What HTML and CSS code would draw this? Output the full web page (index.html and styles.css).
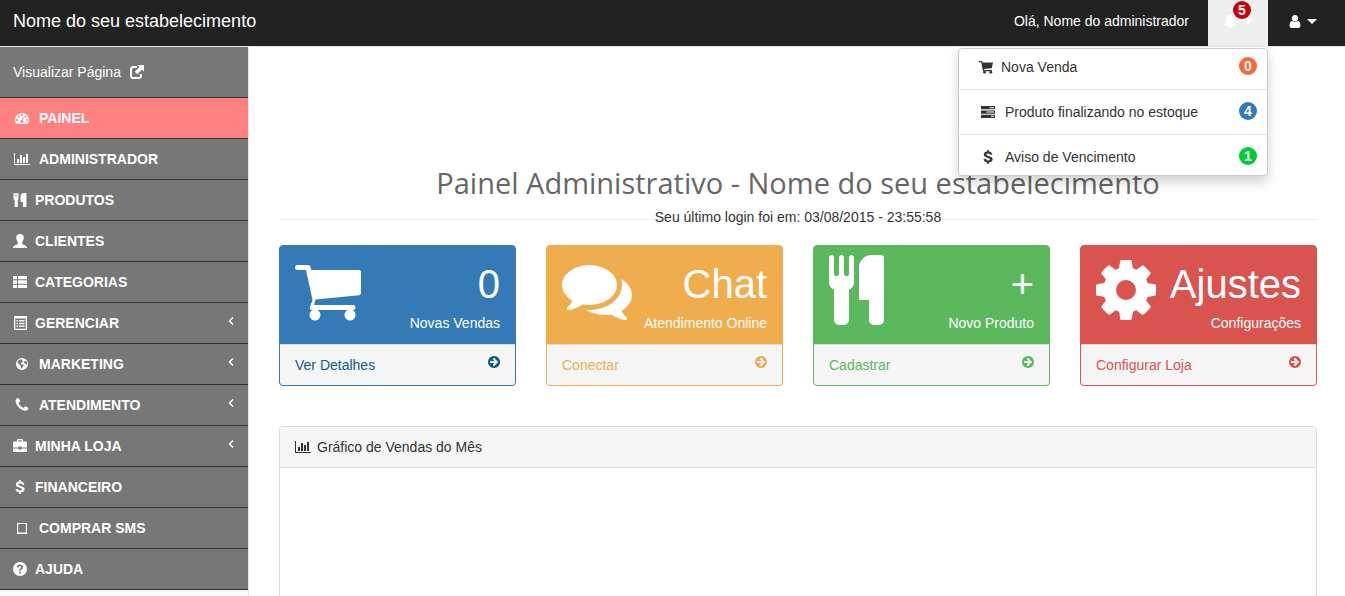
FILE: index.html
```
<!DOCTYPE html>
<html lang="pt-br">
<head>
    <meta charset="UTF-8">
    <meta name="viewport" content="width=device-width, initial-scale=1.0">
    <title>Painel Administrativo</title>
    <link rel="stylesheet" href="styles.css">
</head>
<body>

    <svg class="sprite" aria-hidden="true">
        <symbol id="cart" viewBox="0 -10 66 70">
            <path d="M2.500 0H13q2 0 2.500 2l.8 3H64q2 0 2 2v21q0 2-2 2.300L20.500 34.500 19 40H58q2.500 0 2.500 2.500T58 45H17q-3 0-2-3l2.500-7L11 5H2.500Q0 5 0 2.500T2.500 0z"/>
            <circle cx="20" cy="50" r="5.500"/>
            <circle cx="55" cy="50" r="5.500"/>
        </symbol>
        <symbol id="cart-small" viewBox="0 0 14 14">
            <path d="M0 1h3l.5 1.500H14L12.800 8.300 5 9l.3 1H13v1.200H4L2.200 2.300H0z"/>
            <circle cx="5.500" cy="12.300" r="1.400"/>
            <circle cx="11.800" cy="12.300" r="1.400"/>
        </symbol>
        <symbol id="comments" viewBox="0 0 1792 1792">
            <path d="M1408 768q0 139-94 257t-256.500 186.500-353.500 68.500q-86 0-176-16-124 88-278 128-36 9-86 16h-3q-11 0-20.500-8t-11.500-21q-1-3-1-6.500t.5-6.500 2-6l2.500-5 3.500-5.500 4-5 4.500-5 4-4.500q5-6 23-25t26-29.500 22.500-29 25-38.500 20.500-44q-124-72-195-177t-71-224q0-139 94-257t256.500-186.500 353.500-68.500 353.500 68.500 256.500 186.500 94 257zm384 256q0 120-71 224.500t-195 176.500q10 24 20.500 44t25 38.500 22.500 29 26 29.500 23 25q1 1 4 4.500t4.500 5 4 5 3.500 5.500l2.500 5 2 6 .5 6.500-1 6.500q-3 14-13 22t-22 7q-50-7-86-16-154-40-278-128-90 16-176 16-271 0-472-132 58 4 88 4 161 0 309-45t264-129q125-92 192-212t67-254q0-77-23-152 129 71 204 178t75 230z"/>
        </symbol>
        <symbol id="cutlery" viewBox="192 0 1408 1792">
            <path d="M832 64v640q0 61-35.500 111t-92.500 70v779q0 52-38 90t-90 38h-128q-52 0-90-38t-38-90v-779q-57-20-92.500-70t-35.500-111v-640q0-26 19-45t45-19 45 19 19 45v416q0 26 19 45t45 19 45-19 19-45v-416q0-26 19-45t45-19 45 19 19 45v416q0 26 19 45t45 19 45-19 19-45v-416q0-26 19-45t45-19 45 19 19 45zm768 0v1600q0 52-38 90t-90 38h-128q-52 0-90-38t-38-90v-512h-224q-13 0-22.500-9.500t-9.500-22.500v-800q0-132 94-226t226-94h256q26 0 45 19t19 45z"/>
        </symbol>
        <symbol id="cog" viewBox="128 0 1536 1792">
            <path d="M1152 896q0-106-75-181t-181-75-181 75-75 181 75 181 181 75 181-75 75-181zm512-109v222q0 12-8 23t-20 13l-185 28q-19 54-39 91 35 50 107 138 10 12 10 25t-9 23q-27 37-99 108t-94 71q-12 0-26-9l-138-108q-44 23-91 38-16 136-29 186-7 28-36 28h-222q-14 0-24.500-8.500t-11.500-21.500l-28-184q-49-16-90-37l-141 107q-10 9-25 9-14 0-25-11-126-114-165-168-7-10-7-23 0-12 8-23 15-21 51-66.500t54-70.500q-27-50-41-99l-183-27q-13-2-21-12.500t-8-23.500v-222q0-12 8-23t19-13l186-28q14-46 39-92-40-57-107-138-10-12-10-24 0-10 9-23 26-36 98.500-107.500t94.500-71.500q13 0 26 10l138 107q44-23 91-38 16-136 29-186 7-28 36-28h222q14 0 24.500 8.500t11.500 21.500l28 184q49 16 90 37l142-107q9-9 24-9 13 0 25 10 129 119 165 170 7 8 7 22 0 12-8 23-15 21-51 66.500t-54 70.500q26 50 41 98l183 28q13 2 21 12.500t8 23.500z"/>
        </symbol>
        <symbol id="arrow" viewBox="128 0 1536 1792">
            <path d="M1413 896q0-27-18-45l-91-91-362-362q-18-18-45-18t-45 18l-91 91q-18 18-18 45t18 45l189 189h-502q-26 0-45 19t-19 45v128q0 26 19 45t45 19h502l-189 189q-18 18-18 45t18 45l91 91q18 18 45 18t45-18l362-362 91-91q18-18 18-45zm251 0q0 209-103 385.500t-279.500 279.500-385.500 103-385.500-103-279.500-279.500-103-385.500 103-385.500 279.500-279.500 385.500-103 385.500 103 279.500 279.500 103 385.500z"/>
        </symbol>
        <symbol id="dashboard" viewBox="0 0 1792 1792">
            <path d="M384 1152q0-53-37.500-90.500t-90.500-37.500-90.500 37.500-37.500 90.500 37.500 90.500 90.500 37.500 90.500-37.500 37.500-90.500zm192-448q0-53-37.500-90.500t-90.500-37.500-90.500 37.500-37.500 90.500 37.500 90.500 90.500 37.500 90.500-37.500 37.500-90.500zm428 481l101-382q6-26-7.500-48.500t-38.500-29.500-48 6.500-30 39.500l-101 382q-60 5-107 43.500t-63 98.500q-20 77 20 146t117 89 146-20 89-117q16-60-6-117t-72-91zm660-33q0-53-37.500-90.500t-90.500-37.500-90.500 37.500-37.500 90.500 37.500 90.500 90.500 37.500 90.500-37.500 37.500-90.500zm-640-640q0-53-37.500-90.500t-90.500-37.500-90.500 37.500-37.500 90.500 37.500 90.500 90.500 37.500 90.500-37.500 37.500-90.500zm448 192q0-53-37.500-90.500t-90.500-37.500-90.500 37.500-37.500 90.500 37.500 90.500 90.500 37.500 90.500-37.500 37.500-90.500zm320 448q0 261-141 483-19 29-54 29h-1402q-35 0-54-29-141-221-141-483 0-182 71-348t191-286 286-191 348-71 348 71 286 191 191 286 71 348z"/>
        </symbol>
        <symbol id="chart" viewBox="0 0 2048 1792">
            <path d="M640 896v512h-256v-512h256zm384-512v1024h-256v-1024h256zm1024 1152v128h-2048v-1536h128v1408h1920zm-640-896v768h-256v-768h256zm384-384v1152h-256v-1152h256z"/>
        </symbol>
        <symbol id="food" viewBox="0 0 14 14">
            <path d="M.5 0h1.300v4h.5V0h1.400v4h.5V0h1.300v5.500L4.800 7v7H1.700V7L.5 5.500zM13.500 0v14H10V9H7.500V4q0-4 3.500-4z"/>
        </symbol>
        <symbol id="person" viewBox="0 0 14 14">
            <path d="M7 0q3.800 0 3.800 3.500 0 2.500-1.600 4.500v1.500q0 .8 1.200 1.200Q14 11.800 14 13.500V14H0v-.5q0-1.700 3.600-2.800 1.200-.4 1.200-1.200V8Q3.200 6 3.200 3.500 3.200 0 7 0z"/>
        </symbol>
        <symbol id="th-list" viewBox="0 0 14 14">
            <path d="M0 1h4v3.300H0zM5 1h9v3.300H5zM0 5.300h4v3.400H0zM5 5.300h9v3.400H5zM0 9.700h4V13H0zM5 9.700h9V13H5z"/>
        </symbol>
        <symbol id="list-alt" viewBox="0 0 14 14">
            <path fill-rule="evenodd" d="M1 0h13v14H1zM2.300 2.500v10.200h10.400V2.500z"/>
            <path d="M3.500 4H5v1.500H3.500zM6 4h5.500v1.500H6zM3.500 6.800H5v1.500H3.500zM6 6.800h5.500v1.500H6zM3.500 9.600H5v1.500H3.500zM6 9.600h5.500v1.500H6z"/>
        </symbol>
        <symbol id="globe" viewBox="0 0 14 14">
            <path fill-rule="evenodd" d="M7 1a6 6 0 1 1 0 12A6 6 0 0 1 7 1zM2.500 4.500l1 2.500 2.500 1.500-.5 1.500 1.300 1.800 1-2 1.200-1.500-1.500-1L5.500 7l1-1.500 1.300-.8L7.500 3.500 6 2.200q-2.300.5-3.500 2.300zM10 4l-1 1 .6 1.600 1.600.4.700 1.500q.8-2.500-.7-4.500z"/>
        </symbol>
        <symbol id="phone" viewBox="128 128 1536 1536">
            <path d="M1600 1240q0 27-10 70.500t-21 68.500q-21 50-122 106-94 51-186 51-27 0-53-3.500t-57.500-12.500-47-14.500-55.500-20.500-49-18q-98-35-175-83-127-79-264-216t-216-264q-48-77-83-175-3-9-18-49t-20.500-55.500-14.500-47-12.500-57.500-3.500-53q0-92 51-186 56-101 106-122 25-11 68.500-21t70.500-10q14 0 21 3 18 6 53 76 11 19 30 54t35 63.500 31 53.500q3 4 17.500 25t21.500 35.500 7 28.500q0 20-28.500 50t-62 55-62 53-28.500 46q0 9 5 22.500t8.500 20.500 14 24 11.500 19q76 137 174 235t235 174q2 1 19 11.500t24 14 20.500 8.500 22.500 5q18 0 46-28.500t53-62 55-62 50-28.500q14 0 28.500 7t35.500 21.500 25 17.500q25 15 53.500 31t63.500 35 54 30q70 35 76 53 3 7 3 21z"/>
        </symbol>
        <symbol id="briefcase" viewBox="0 0 14 14">
            <path fill-rule="evenodd" d="M4 2.500V1q0-1 1-1h4q1 0 1 1v1.500h3q1 0 1 1v5H8.500v-1h-3v1H0v-5q0-1 1-1zM5.300 1.200v1.300h3.400V1.200zM0 9.500h5.500v1h3v-1H14V13H0z"/>
        </symbol>
        <symbol id="dollar" viewBox="0 0 14 14">
            <path d="M6.200 0h1.600v1.500q3 .3 3.600 3.200H9.200q-.5-1.200-2.200-1.200t-1.700 1.100q0 .9 2.200 1.400 4.100.8 4.100 3.200 0 2.800-3.800 3.200V14H6.200v-1.600Q2.800 12 2.500 9h2.400q.2 1.500 2.200 1.500 1.900 0 1.900-1.300 0-1-2.300-1.500-3.900-.8-3.900-3.100 0-2.700 3.400-3.100z"/>
        </symbol>
        <symbol id="tablet" viewBox="0 0 14 14">
            <path fill-rule="evenodd" d="M2 2h10v11H2zM3.200 3v8.500h7.600V3z"/>
        </symbol>
        <symbol id="question" viewBox="0 0 14 14">
            <circle cx="7" cy="7" r="7"/>
            <path fill="none" stroke="#777" stroke-width="1.800" d="M4.800 5.500Q4.800 3.400 7 3.400t2.200 1.900Q9.200 6.400 8 7 7 7.500 7 8.800M7 9.800v1.800"/>
        </symbol>
        <symbol id="share" viewBox="0 0 14 14">
            <path fill="none" stroke="currentColor" stroke-width="2" d="M7 2H3.500Q1 2 1 4.500v6Q1 13 3.500 13h5q2.500 0 2.500-2.500V9"/>
            <path d="M7.500 0H14v6.500l-2-2-4.700 4.700-2.500-2.500L9.500 2z"/>
        </symbol>
        <symbol id="tasks" viewBox="0 0 14 14">
            <path fill-rule="evenodd" d="M0 1h14v3.300H0zM8.500 2.200v1H13v-1zM0 5.400h14v3.300H0zM5.500 6.500v1H13v-1zM0 9.700h14V13H0zM10 10.800v1h3v-1z"/>
        </symbol>
        <symbol id="bell" viewBox="0 0 14 14">
            <path d="M7 0q1 0 1 1.200 2.800.8 2.800 4 0 4 2.700 5.800v1h-5Q8.500 14 7 14t-1.500-2h-5v-1q2.700-1.800 2.700-5.800 0-3.200 2.800-4Q6 0 7 0z"/>
        </symbol>
        <symbol id="user" viewBox="256 128 1280 1536">
            <path d="M1536 1399q0 109-62.500 187t-150.500 78h-854q-88 0-150.500-78t-62.500-187q0-85 8.500-160.500t31.500-152 58.500-131 94-89 134.500-34.500q131 128 313 128t313-128q76 0 134.500 34.500t94 89 58.500 131 31.500 152 8.500 160.500zm-256-887q0 159-112.500 271.500t-271.500 112.500-271.500-112.500-112.500-271.500 112.500-271.500 271.500-112.500 271.500 112.500 112.500 271.500z"/>
        </symbol>
        <symbol id="angle" viewBox="0 0 6 10">
            <path fill="none" stroke="currentColor" stroke-width="1.500" d="M5 1.500L1.500 5 5 8.500"/>
        </symbol>
    </svg>

    <header class="navbar">
        <a class="brand" href="#">Nome do seu estabelecimento</a>
        <div class="navbar-right">
            <span class="ola">Olá, Nome do administrador</span>
            <div class="dropdown">
                <button class="nav-btn aberto" aria-label="Notificações">
                    <svg class="icon"><use href="#bell"/></svg>
                    <span class="caret"></span>
                    <span class="badge badge-alerta">5</span>
                </button>
                <ul class="dropdown-menu">
                    <li><a href="#"><svg class="icon"><use href="#cart-small"/></svg>Nova Venda<span class="badge laranja">0</span></a></li>
                    <li><a href="#"><svg class="icon fw"><use href="#tasks"/></svg>Produto finalizando no estoque<span class="badge azul">4</span></a></li>
                    <li><a href="#"><svg class="icon fw"><use href="#dollar"/></svg>Aviso de Vencimento<span class="badge verde">1</span></a></li>
                </ul>
            </div>
            <button class="nav-btn usuario" aria-label="Usuário">
                <svg class="icon"><use href="#user"/></svg>
                <span class="caret"></span>
            </button>
        </div>
    </header>

    <div class="wrapper">
        <nav class="sidebar">
            <a class="visualizar" href="#">Visualizar Página<svg class="icon"><use href="#share"/></svg></a>
            <ul class="menu">
                <li><a class="ativo" href="#"><svg class="icon fw"><use href="#dashboard"/></svg>PAINEL</a></li>
                <li><a href="#"><svg class="icon fw"><use href="#chart"/></svg>ADMINISTRADOR</a></li>
                <li><a href="#"><svg class="icon"><use href="#food"/></svg>PRODUTOS</a></li>
                <li><a href="#"><svg class="icon"><use href="#person"/></svg>CLIENTES</a></li>
                <li><a href="#"><svg class="icon"><use href="#th-list"/></svg>CATEGORIAS</a></li>
                <li><a href="#"><svg class="icon"><use href="#list-alt"/></svg>GERENCIAR<svg class="angle"><use href="#angle"/></svg></a></li>
                <li><a href="#"><svg class="icon fw"><use href="#globe"/></svg>MARKETING<svg class="angle"><use href="#angle"/></svg></a></li>
                <li><a href="#"><svg class="icon fw"><use href="#phone"/></svg>ATENDIMENTO<svg class="angle"><use href="#angle"/></svg></a></li>
                <li><a href="#"><svg class="icon"><use href="#briefcase"/></svg>MINHA LOJA<svg class="angle"><use href="#angle"/></svg></a></li>
                <li><a href="#"><svg class="icon"><use href="#dollar"/></svg>FINANCEIRO</a></li>
                <li><a href="#"><svg class="icon fw"><use href="#tablet"/></svg>COMPRAR SMS</a></li>
                <li><a href="#"><svg class="icon"><use href="#question"/></svg>AJUDA</a></li>
            </ul>
        </nav>

        <main class="conteudo">
            <h1 class="titulo">Painel Administrativo - Nome do seu estabelecimento</h1>
            <p class="login">Seu último login foi em: 03/08/2015 - 23:55:58</p>

            <div class="cards">
                <section class="card card-azul">
                    <div class="card-topo">
                        <svg class="card-icon icon-cart"><use href="#cart"/></svg>
                        <div class="card-info">
                            <div class="numero">0</div>
                            <div>Novas Vendas</div>
                        </div>
                    </div>
                    <a class="card-rodape" href="#">Ver Detalhes<svg class="icon-arrow"><use href="#arrow"/></svg></a>
                </section>
                <section class="card card-laranja">
                    <div class="card-topo">
                        <svg class="card-icon icon-comments"><use href="#comments"/></svg>
                        <div class="card-info">
                            <div class="numero">Chat</div>
                            <div>Atendimento Online</div>
                        </div>
                    </div>
                    <a class="card-rodape" href="#">Conectar<svg class="icon-arrow"><use href="#arrow"/></svg></a>
                </section>
                <section class="card card-verde">
                    <div class="card-topo">
                        <svg class="card-icon icon-cutlery"><use href="#cutlery"/></svg>
                        <div class="card-info">
                            <div class="numero">+</div>
                            <div>Novo Produto</div>
                        </div>
                    </div>
                    <a class="card-rodape" href="#">Cadastrar<svg class="icon-arrow"><use href="#arrow"/></svg></a>
                </section>
                <section class="card card-vermelho">
                    <div class="card-topo">
                        <svg class="card-icon icon-cog"><use href="#cog"/></svg>
                        <div class="card-info">
                            <div class="numero">Ajustes</div>
                            <div>Configurações</div>
                        </div>
                    </div>
                    <a class="card-rodape" href="#">Configurar Loja<svg class="icon-arrow"><use href="#arrow"/></svg></a>
                </section>
            </div>

            <section class="painel">
                <h2 class="painel-titulo"><svg class="icon wide"><use href="#chart"/></svg>Gráfico de Vendas do Mês</h2>
                <div class="painel-corpo"></div>
            </section>
        </main>
    </div>

</body>
</html>
```

FILE: styles.css
```
* {
    box-sizing: border-box;
}
body {
    display: flex;
    flex-direction: column;
    height: 100vh;
    margin: 0;
    overflow: hidden;
    font-family: "Liberation Sans", Arial, sans-serif;
    font-size: 14px;
    line-height: 20px;
    color: #333;
    background: #f8f8f8;
}
a {
    color: inherit;
    text-decoration: none;
}
ul {
    list-style: none;
    margin: 0;
    padding: 0;
}
svg {
    flex: none;
    fill: currentColor;
}
.sprite {
    display: none;
}
.icon {
    width: 14px;
    height: 14px;
}
.fw {
    width: 18px;
}
.wide {
    width: 16px;
}

/* topo */
.navbar {
    display: flex;
    justify-content: space-between;
    height: 47px;
    background: #222;
    border-bottom: 1px solid #e7e7e7;
    color: #fff;
}
.brand {
    padding: 11px 13px;
    font-size: 18px;
}
.navbar-right {
    display: flex;
}
.ola {
    padding: 11px 19px;
}
.dropdown {
    position: relative;
    display: flex;
}
.nav-btn {
    position: relative;
    display: flex;
    align-items: center;
    justify-content: center;
    gap: 6px;
    width: 60px;
    padding: 0 0 4px;
    border: none;
    background: none;
    color: #fff;
    cursor: pointer;
}
.nav-btn.aberto {
    background: #eee;
}
.nav-btn.usuario {
    width: 77px;
    padding-right: 7px;
}
.nav-btn.usuario .icon {
    width: 12px;
    height: 13px;
}
.caret {
    border-top: 5px solid;
    border-left: 5px solid transparent;
    border-right: 5px solid transparent;
}
.badge {
    width: 18px;
    height: 18px;
    border-radius: 50%;
    color: #fff;
    font-size: 14px;
    font-weight: bold;
    line-height: 18px;
    text-align: center;
}
.badge-alerta {
    position: absolute;
    top: 1px;
    right: 17px;
    background: #c7000b;
}
.laranja {
    background: #ff6633;
}
.azul {
    background: #337ab7;
}
.verde {
    background: #00cc33;
}
.dropdown-menu {
    position: absolute;
    top: 48px;
    right: 0;
    z-index: 10;
    width: 310px;
    padding: 5px 0;
    background: #fff;
    border: 1px solid #ccc;
    border-radius: 4px;
    box-shadow: 0 6px 12px rgba(0, 0, 0, 0.18);
    color: #333;
}
.dropdown-menu li + li {
    margin-top: 9px;
    padding-top: 9px;
    border-top: 1px solid #e5e5e5;
}
.dropdown-menu a {
    display: flex;
    align-items: center;
    gap: 8px;
    padding: 3px 10px 3px 20px;
}
.dropdown-menu .badge {
    align-self: flex-start;
    margin-left: auto;
}

/* menu lateral */
.wrapper {
    display: flex;
    flex: 1;
    min-height: 0;
}
.sidebar {
    flex: none;
    width: 249px;
    border-right: 1px solid #e7e7e7;
    color: #fff;
}
.visualizar {
    display: flex;
    align-items: center;
    gap: 9px;
    height: 51px;
    padding: 0 13px;
    background: #777;
    border-bottom: 1px solid #333;
}
.menu a {
    display: flex;
    align-items: center;
    gap: 8px;
    height: 41px;
    padding: 0 14px 0 13px;
    background: #777;
    border-bottom: 1px solid #333;
    font-weight: bold;
}
.menu a:hover,
.menu a.ativo {
    background: #ff8080;
}
.angle {
    width: 6px;
    height: 10px;
    margin: 0 0 5px auto;
}

/* conteudo */
.conteudo {
    display: flex;
    flex-direction: column;
    flex: 1;
    min-width: 0;
    padding: 116px 28px 0 30px;
    background: #fff;
}
.titulo {
    margin: 0;
    padding-bottom: 16px;
    border-bottom: 1px solid #eee;
    color: #666;
    font-family: "Trebuchet MS", "Open Sans", sans-serif;
    font-size: 29px;
    font-weight: normal;
    line-height: 40px;
    text-align: center;
}
.login {
    margin: -13px 0 18px;
    text-align: center;
}
.cards {
    display: grid;
    grid-template-columns: repeat(4, 1fr);
    gap: 30px;
    margin-bottom: 40px;
}
.card {
    border: 1px solid;
    border-radius: 4px;
    overflow: hidden;
}
.card-azul {
    border-color: #337ab7;
    background: #337ab7;
    color: #0e5a8a;
}
.card-laranja {
    border-color: #f0ad4e;
    background: #f0ad4e;
    color: #f0ad4e;
}
.card-verde {
    border-color: #5cb85c;
    background: #5cb85c;
    color: #5cb85c;
}
.card-vermelho {
    border-color: #d9534f;
    background: #d9534f;
    color: #d9534f;
}
.card-topo {
    display: flex;
    justify-content: space-between;
    height: 98px;
    padding: 9px 15px;
    color: #fff;
}
.card-icon {
    height: 70px;
}
.icon-cart {
    width: 66px;
}
.icon-comments {
    width: 70px;
}
.icon-cutlery {
    width: 55px;
}
.icon-cog {
    width: 60px;
}
.card-info {
    text-align: right;
}
.numero {
    font-size: 40px;
    line-height: 58px;
}
.card-rodape {
    display: flex;
    justify-content: space-between;
    padding: 10px 15px;
    background: #f5f5f5;
    border-top: 1px solid #ddd;
}
.icon-arrow {
    width: 12px;
    height: 14px;
}
.painel {
    flex: 1;
    border: 1px solid #ddd;
    border-bottom: none;
    border-radius: 4px 4px 0 0;
}
.painel-titulo {
    display: flex;
    align-items: center;
    gap: 6px;
    margin: 0;
    padding: 10px 15px;
    background: #f5f5f5;
    border-bottom: 1px solid #ddd;
    font-size: 14px;
    font-weight: normal;
}
.painel-corpo {
    padding: 15px;
}
```
